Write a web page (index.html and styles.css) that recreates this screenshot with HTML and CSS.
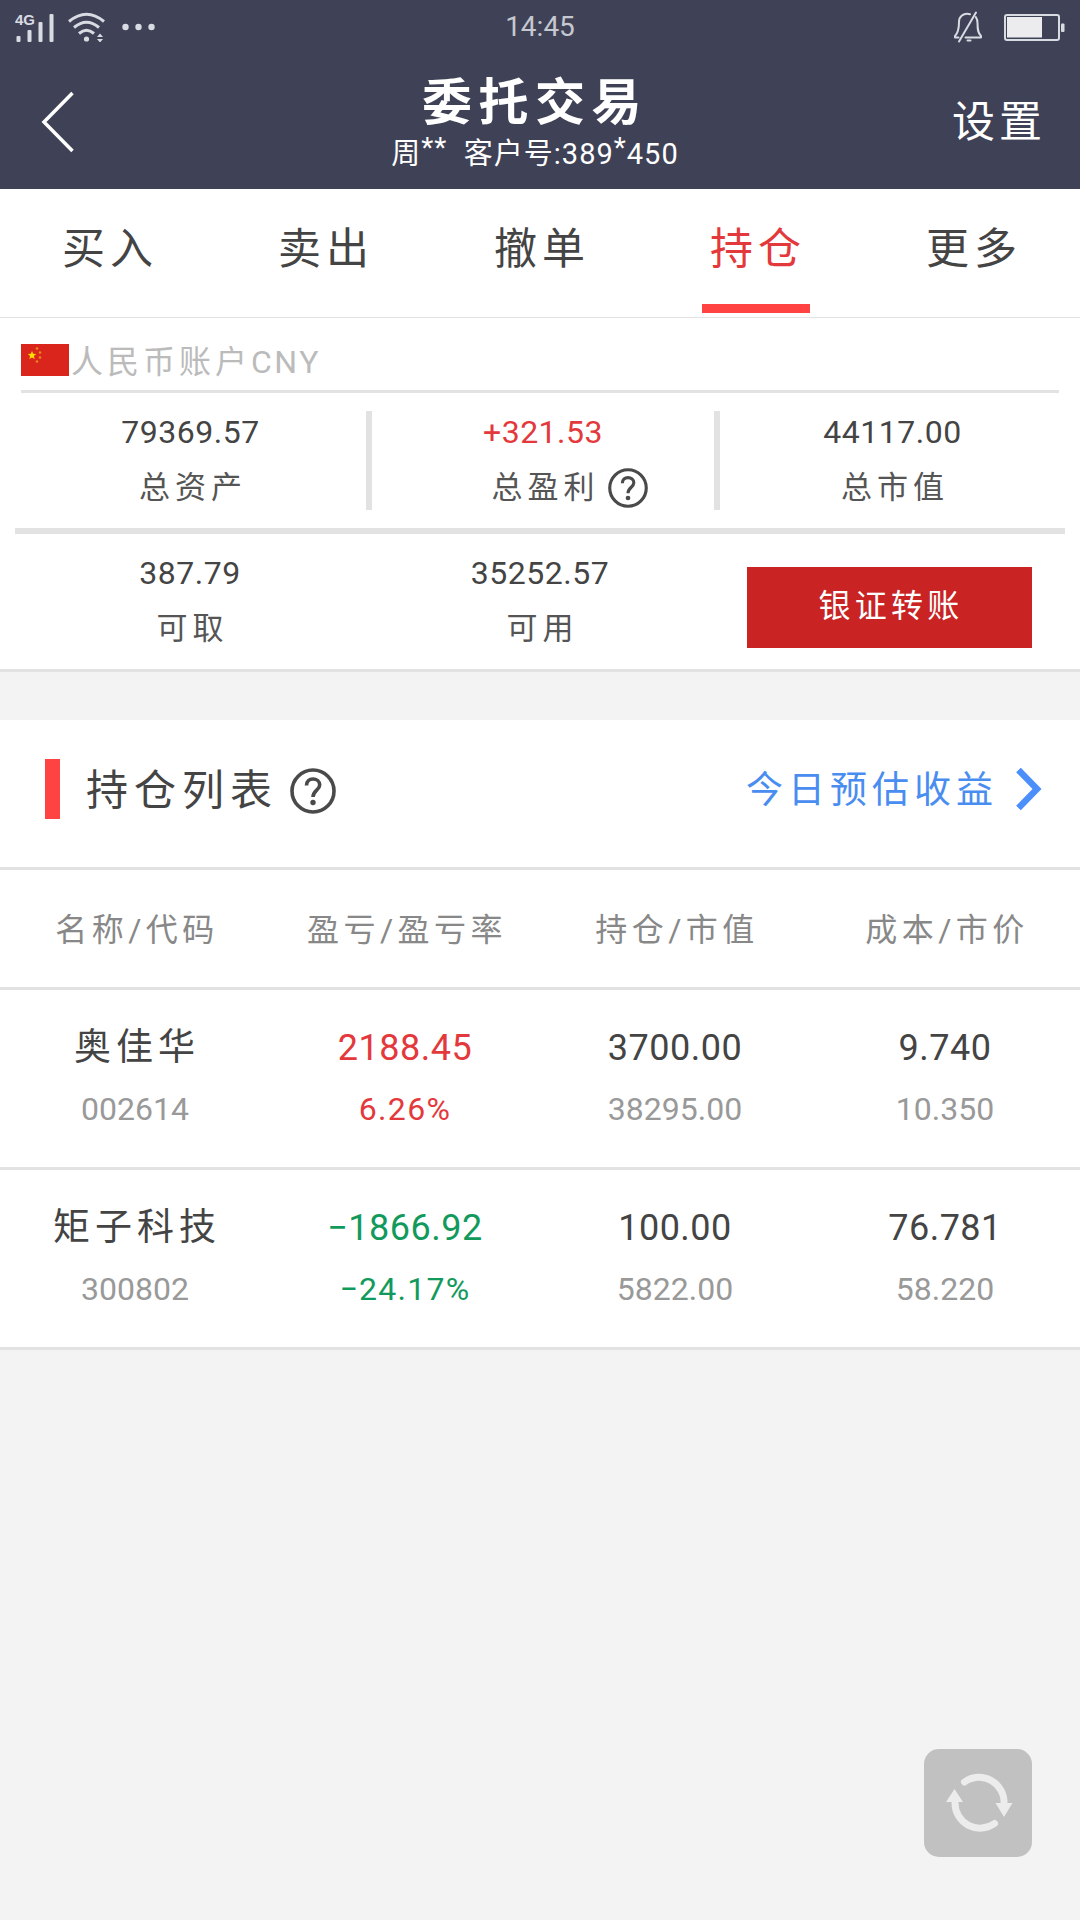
FILE: index.html
```html
<!DOCTYPE html>
<html lang="zh-CN">
<head>
  <meta charset="utf-8">
  <title>委托交易</title>
  <meta name="viewport" content="width=1080">
  <link rel="stylesheet" href="styles.css">
</head>
<body>

<header class="header">
  <div class="status">
    <div class="status-left">
      <svg class="signal" width="40" height="30" viewBox="0 0 40 30">
        <text x="0" y="12.500">4G</text>
        <rect x="1.500" y="24" width="4" height="6" rx="1"/>
        <rect x="12.500" y="18" width="4" height="12" rx="1"/>
        <rect x="23.500" y="10" width="4" height="20" rx="1"/>
        <rect x="34.500" y="2" width="4" height="28" rx="1"/>
      </svg>
      <svg class="wifi" width="38" height="30" viewBox="0 0 38 30">
        <g fill="none" stroke="#d9dbe2" stroke-width="3">
          <path d="M1 9.500Q18.500 -5 36 9.500"/>
          <path d="M6 15.500Q18.500 5 31 15.500"/>
          <path d="M11 21.500Q18.500 15 26 21.500"/>
        </g>
        <circle cx="18.500" cy="27" r="2.600"/>
        <path d="M29 25l3-3.500 3 3.500zM29 27l3 3.500 3-3.500z"/>
      </svg>
      <svg width="34" height="8" viewBox="0 0 34 8">
        <circle cx="3.500" cy="4" r="3.200"/><circle cx="16.500" cy="4" r="3.200"/><circle cx="29.500" cy="4" r="3.200"/>
      </svg>
    </div>
    <div class="time">14:45</div>
    <div class="status-right">
      <svg width="30" height="32" viewBox="0 0 30 32">
        <g fill="none" stroke="#d9dbe2" stroke-width="2" stroke-linecap="round" stroke-linejoin="round">
          <path d="M17 3.200C10 1.500 6 6 6 11C6 19 5 22 2 25V26.500H5.500M12.500 26.500H28V25C25 22 24.500 19 24.500 12C24.500 9 23.800 7.500 22.800 6"/>
          <path d="M23 1.500L6 30.500"/>
          <path d="M14.500 29.500h3"/>
        </g>
      </svg>
      <svg width="61" height="27" viewBox="0 0 61 27">
        <rect x="1" y="1" width="54" height="25" rx="2" fill="none" stroke="#d9dbe2" stroke-width="2"/>
        <rect x="3" y="3" width="35" height="20.500" fill="#ececee"/>
        <rect x="57" y="9.500" width="3.500" height="8.500" rx="1"/>
      </svg>
    </div>
  </div>

  <div class="titlebar">
    <a class="back" href="#">
      <svg width="34" height="62" viewBox="0 0 34 62">
        <path d="M31.500 2L3 31L31.500 60" fill="none" stroke="#fff" stroke-width="3.500"/>
      </svg>
    </a>
    <div class="title">
      <h1>委托交易</h1>
      <p>周<span class="mask">**</span> &nbsp;客户号:389<span class="mask">*</span>450</p>
    </div>
    <a class="settings" href="#">设置</a>
  </div>
</header>

<nav class="tabs">
  <a href="#">买入</a>
  <a href="#">卖出</a>
  <a href="#">撤单</a>
  <a class="active" href="#">持仓</a>
  <a href="#">更多</a>
</nav>

<section class="account">
  <div class="account-name">
    <svg width="48" height="32" viewBox="0 0 48 32">
      <rect width="48" height="32" fill="#da251c"/>
      <path fill="#ffde00" d="M11 7l1.200 2.800 3 .2-2.300 2 .8 3-2.700-1.600L8.300 15l.8-3-2.300-2 3-.2z"/>
      <g fill="#e8891a">
        <circle cx="16" cy="4.500" r="1.300"/><circle cx="19" cy="8.500" r="1.300"/>
        <circle cx="19" cy="13.500" r="1.300"/><circle cx="16" cy="17.500" r="1.300"/>
      </g>
    </svg>
    <span>人民币账户<em>CNY</em></span>
  </div>

  <div class="summary">
    <div class="cell">
      <b>79369.57</b>
      <span>总资产</span>
    </div>
    <div class="cell">
      <b class="up">+321.53</b>
      <span class="with-help">总盈利
        <svg class="help" width="40" height="40" viewBox="0 0 46 46">
          <circle cx="23" cy="23" r="21"/>
          <path d="M16.500 17.500C16.500 13 19.500 11 23 11S29.700 13.300 29.700 17C29.700 22 23 22.500 23 29"/>
          <circle class="dot" cx="23" cy="34.500" r="2.700"/>
        </svg>
      </span>
    </div>
    <div class="cell">
      <b>44117.00</b>
      <span>总市值</span>
    </div>
  </div>

  <div class="summary summary-cash">
    <div class="cell">
      <b>387.79</b>
      <span>可取</span>
    </div>
    <div class="cell">
      <b>35252.57</b>
      <span>可用</span>
    </div>
    <button class="transfer">银证转账</button>
  </div>
</section>

<section class="holdings">
  <div class="holdings-head">
    <h2><span>持仓列表</span></h2>
    <svg class="help" width="46" height="46" viewBox="0 0 46 46">
      <circle cx="23" cy="23" r="21"/>
      <path d="M16.500 17.500C16.500 13 19.500 11 23 11S29.700 13.300 29.700 17C29.700 22 23 22.500 23 29"/>
      <circle class="dot" cx="23" cy="34.500" r="2.700"/>
    </svg>
    <a class="today" href="#"><span>今日预估收益</span>
      <svg width="28" height="44" viewBox="0 0 28 44">
        <path d="M3.500 3L22 22L3.500 41" fill="none" stroke="#4c8ffb" stroke-width="6.500"/>
      </svg>
    </a>
  </div>

  <div class="row row-head">
    <span>名称/代码</span>
    <span>盈亏/盈亏率</span>
    <span>持仓/市值</span>
    <span>成本/市价</span>
  </div>

  <div class="row">
    <div><b class="name">奥佳华</b><i>002614</i></div>
    <div class="up"><b>2188.45</b><i>6.26%</i></div>
    <div><b>3700.00</b><i>38295.00</i></div>
    <div><b>9.740</b><i>10.350</i></div>
  </div>

  <div class="row">
    <div><b class="name">矩子科技</b><i>300802</i></div>
    <div class="down"><b>−1866.92</b><i>−24.17%</i></div>
    <div><b>100.00</b><i>5822.00</i></div>
    <div><b>76.781</b><i>58.220</i></div>
  </div>
</section>

<button class="refresh" aria-label="刷新">
  <svg width="70" height="62" viewBox="0 0 70 62">
    <g fill="none" stroke="#ececec" stroke-width="7" stroke-linecap="round">
      <path d="M21.500 10A25 25 0 0 1 61 32"/>
      <path d="M51.500 51.500A25 25 0 0 1 12 31"/>
    </g>
    <path fill="#ececec" d="M52.500 31H69.500L61 45zM3 30H20L11.500 17z"/>
  </svg>
</button>

</body>
</html>
```
FILE: styles.css
```css
* {
  box-sizing: border-box;
}

body {
  margin: 0;
  min-height: 1920px;
  background: #f3f3f3;
  color: #444;
  font-family: Roboto, "Noto Sans CJK SC", sans-serif;
  font-size: 31px;
}

a {
  color: inherit;
  text-decoration: none;
}

h1, h2, p {
  margin: 0;
  font-weight: normal;
}

b, i, em {
  font-weight: normal;
  font-style: normal;
}

svg {
  display: block;
  flex: none;
}

button {
  border: 0;
  padding: 0;
  font-family: inherit;
}

.up {
  color: #e4393c;
}

.down {
  color: #129a5c;
}

/* header */
.header {
  height: 189px;
  background: #3f4256;
  color: #fff;
}

.status {
  display: grid;
  grid-template-columns: 1fr auto 1fr;
  align-items: center;
  height: 54px;
  padding: 0 15px;
  fill: #d9dbe2;
}

.status-left,
.status-right {
  display: flex;
  align-items: center;
}

.status-right {
  justify-content: flex-end;
  gap: 21px;
}

.signal text {
  font: bold 15px "Liberation Sans", sans-serif;
}

.wifi {
  margin: 0 16px 0 13px;
}

.time {
  color: #c6c8d0;
  font-size: 28px;
  line-height: 30px;
}

.titlebar {
  display: grid;
  grid-template-columns: 1fr auto 1fr;
  align-items: center;
  height: 135px;
  padding: 0 34px 0 24px;
}

.back {
  margin-left: 17px;
}

.title {
  padding-top: 4px;
  text-align: center;
}

.title h1 {
  font-size: 50px;
  font-weight: bold;
  letter-spacing: 6.500px;
  line-height: 60px;
}

.title p {
  font-size: 29px;
  letter-spacing: 1px;
  line-height: 42px;
}

.title .mask {
  font-size: 28px;
  line-height: 1;
  vertical-align: 7px;
}

.settings {
  justify-self: end;
  padding-bottom: 8px;
  font-size: 43px;
  letter-spacing: 4px;
}

/* tabs */
.tabs {
  display: flex;
  height: 129px;
  background: #fff;
  border-bottom: 1px solid #e2e2e2;
}

.tabs a {
  display: flex;
  flex: 1;
  flex-direction: column;
  align-items: center;
  justify-content: space-between;
  padding: 3px 0 4px;
  font-size: 43px;
  letter-spacing: 5px;
  line-height: 115px;
  text-indent: 4px;
}

.tabs .active {
  color: #e4393c;
}

.tabs .active::after {
  content: "";
  flex: none;
  width: 108px;
  height: 9px;
  margin-top: -4px;
  background: #ff4343;
}

/* account */
.account {
  background: #fff;
  border-bottom: 3px solid #e2e2e2;
}

.account-name {
  display: flex;
  align-items: center;
  height: 75px;
  margin: 0 21px;
  padding-top: 12px;
  border-bottom: 3px solid #e2e2e2;
  color: #bbb;
  font-size: 32px;
  letter-spacing: 4px;
}

.account-name span {
  margin: -2px 0 0 2px;
}

.account-name em {
  letter-spacing: 2.500px;
}

.summary {
  display: grid;
  grid-template-columns: 357px 348px 345px;
  height: 141px;
  margin: 0 15px;
  padding: 18px 0;
  border-bottom: 6px solid #e2e2e2;
}

.cell {
  display: flex;
  flex-direction: column;
  align-items: center;
  border-right: 6px solid #e2e2e2;
}

.cell:last-child {
  border-right: 0;
}

.cell b {
  font-size: 32px;
  letter-spacing: .500px;
  line-height: 42px;
}

.cell span {
  color: #555;
  letter-spacing: 5px;
  line-height: 40px;
  margin-top: 15px;
  text-indent: 5px;
}

.with-help {
  display: flex;
  align-items: center;
  gap: 8px;
  margin-right: -48px;
}

.help {
  fill: none;
  stroke: #4a4a4a;
  stroke-width: 3.600;
}

.help .dot {
  fill: #4a4a4a;
  stroke: none;
}

.summary-cash {
  grid-template-columns: 350px 350px 350px;
  height: 135px;
  border-bottom: 0;
}

.summary-cash .cell {
  border-right: 0;
}

.transfer {
  width: 285px;
  height: 81px;
  margin: 15px auto 0 32px;
  padding: 0 0 9px 3px;
  background: #c92323;
  color: #fff;
  font-size: 32px;
  letter-spacing: 4.300px;
}

/* holdings */
.holdings {
  margin-top: 48px;
  background: #fff;
}

.holdings-head {
  display: flex;
  align-items: center;
  height: 150px;
  padding: 0 37px 9px 45px;
  border-bottom: 3px solid #e2e2e2;
}

.holdings-head h2 {
  height: 60px;
  padding: 2px 0 0 26px;
  border-left: 15px solid #ff4343;
  font-size: 42px;
  letter-spacing: 6px;
  line-height: 60px;
}

.holdings-head > .help {
  margin: 3px 0 0 12px;
}

.today {
  display: flex;
  align-items: center;
  gap: 17px;
  margin-left: auto;
  color: #4a8df0;
  font-size: 37px;
  letter-spacing: 5px;
}

.today span {
  padding-bottom: 4px;
}

.row {
  display: grid;
  grid-template-columns: repeat(4, 1fr);
  height: 180px;
  border-bottom: 3px solid #e2e2e2;
  text-align: center;
}

.row-head {
  align-items: center;
  height: 120px;
  padding-bottom: 4px;
  color: #888;
  font-size: 32px;
  letter-spacing: 4.500px;
  text-indent: 4px;
}

.row b,
.row i {
  display: block;
}

.row b {
  padding-top: 28px;
  font-size: 36px;
  letter-spacing: .500px;
  line-height: 60px;
}

.row .name {
  font-size: 37px;
  letter-spacing: 5px;
  text-indent: 4px;
}

.row i {
  color: #999;
  font-size: 32px;
  line-height: 62px;
}

.row .up i,
.row .down i {
  color: inherit;
  letter-spacing: 1.300px;
}

/* floating refresh button */
.refresh {
  position: fixed;
  right: 48px;
  bottom: 63px;
  display: flex;
  align-items: center;
  justify-content: center;
  width: 108px;
  height: 108px;
  border-radius: 15px;
  background: #c1c1c1;
}
```
